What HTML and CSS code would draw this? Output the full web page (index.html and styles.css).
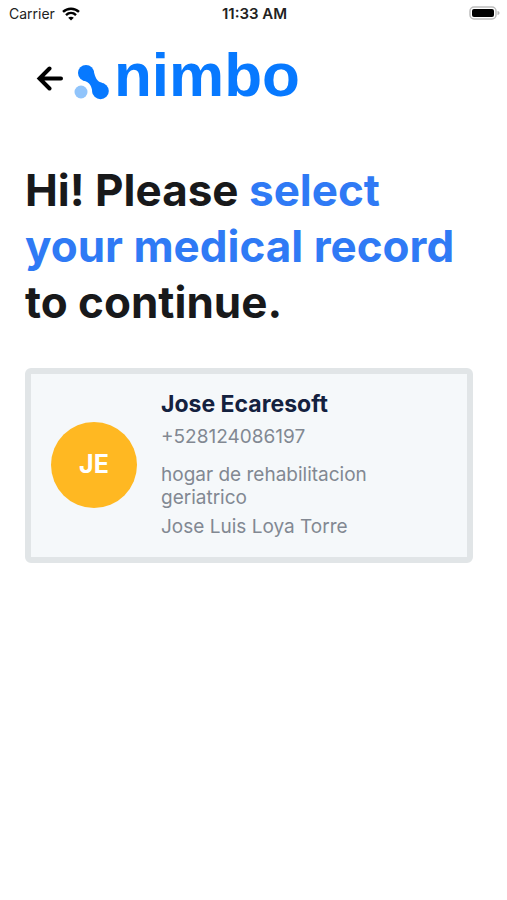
FILE: index.html
```html
<!DOCTYPE html>
<html lang="en">
<head>
<meta charset="utf-8">
<meta name="viewport" content="width=device-width, initial-scale=1">
<title>nimbo</title>
<link rel="stylesheet" href="styles.css">
</head>
<body>
<div class="status">
  <div class="carrier">
    <span>Carrier</span>
    <svg width="18" height="14" viewBox="0 0 18 14" fill="none" stroke="#000" stroke-width="2.4" aria-hidden="true">
      <path d="M1 4.9C5.4.6 12.6.6 17 4.9"/>
      <path d="M4 8.1C6.9 5.3 11.1 5.3 14 8.1"/>
      <path d="M9 13.6 6.2 10.8C7.8 9.3 10.2 9.3 11.8 10.8Z" fill="#000" stroke="none"/>
    </svg>
  </div>
  <time class="clock">11:33 AM</time>
  <div class="battery">
    <svg width="31" height="15" viewBox="0 0 31 15" aria-hidden="true">
      <rect x="1" y="1" width="26" height="12" rx="4" fill="#fff" stroke="#bdbdbd" stroke-width="1.5"/>
      <rect x="3" y="3" width="22" height="8" rx="2" fill="#000"/>
      <path d="M28.5 5C31.2 5.5 31.2 8.5 28.5 9Z" fill="#b5b5b5"/>
    </svg>
  </div>
</div>
<header class="topbar">
  <button class="back" type="button" aria-label="Back">
    <svg width="28" height="28" viewBox="0 0 28 28" fill="none" stroke="#000" stroke-width="4" stroke-linecap="round" stroke-linejoin="miter" aria-hidden="true">
      <path d="M13.5 5.5 3.5 15.5 13.5 25.500M4 15.500H25"/>
    </svg>
  </button>
  <div class="logo">
    <svg width="36" height="36" viewBox="0 0 36 36" aria-hidden="true">
      <circle cx="7" cy="28" r="6.5" fill="#90c4fb"/>
      <g fill="#0779ff">
        <circle cx="12" cy="9" r="8"/>
        <circle cx="26.5" cy="27" r="8.3"/>
        <path d="M19.6 6.5C21.5 14 22.5 17.5 28.5 19L19 30.5C17.5 22 16.5 18.5 9 16.5Z"/>
      </g>
    </svg>
    <span class="wordmark">nimbo</span>
  </div>
</header>
<main>
  <h1>Hi! Please <em>select your medical record</em> to continue.</h1>
  <button class="record" type="button">
    <span class="avatar">JE</span>
    <span class="details">
      <span class="name">Jose Ecaresoft</span>
      <span class="phone">+528124086197</span>
      <span class="clinic">hogar de rehabilitacion geriatrico</span>
      <span class="doctor">Jose Luis Loya Torre</span>
    </span>
  </button>
</main>
</body>
</html>
```
FILE: styles.css
```css
* {
  box-sizing: border-box;
}

body {
  margin: 0;
  background: #fff;
  color: #18191b;
  font-family: Inter, "Liberation Sans", sans-serif;
}

.status {
  display: grid;
  grid-template-columns: 1fr auto 1fr;
  align-items: center;
  height: 27px;
  padding: 0 7px 0 9px;
  color: #222;
  font-size: 14px;
  line-height: 20px;
}

.carrier {
  display: flex;
  align-items: center;
  gap: 7px;
}

.clock {
  font-size: 15px;
  font-weight: 600;
}

.battery {
  display: flex;
  justify-content: flex-end;
}

.topbar {
  display: flex;
  align-items: center;
  gap: 10px;
  height: 100px;
  padding: 0 36px;
}

.back {
  display: flex;
  padding: 0;
  border: 0;
  background: none;
}

.logo {
  display: flex;
  align-items: center;
  gap: 4px;
}

.logo svg {
  margin-top: 10px;
}

.wordmark {
  padding-bottom: 4px;
  color: #0779ff;
  font: bold 62px/72px "Liberation Sans", Arial, sans-serif;
}

main {
  padding: 35px 34px 0 25px;
}

h1 {
  margin: 0 0 38px;
  font-size: 44px;
  font-weight: 700;
  line-height: 56px;
}

h1 em {
  color: #2f7af5;
  font-style: normal;
}

.record {
  display: flex;
  align-items: center;
  gap: 24px;
  width: 100%;
  padding: 17px 50px 19px 20px;
  border: 6px solid #e1e5e7;
  border-radius: 6px;
  background: #f5f8fa;
  color: #828892;
  font: 19px/23px Inter, "Liberation Sans", sans-serif;
  text-align: left;
}

.avatar {
  display: flex;
  flex: none;
  align-items: center;
  justify-content: center;
  width: 86px;
  height: 86px;
  border-radius: 50%;
  background: #ffb822;
  color: #fff;
  font-size: 25px;
  font-weight: 700;
}

.details {
  display: flex;
  flex: 1;
  flex-direction: column;
}

.name {
  margin-bottom: 8px;
  color: #14213f;
  font-size: 23px;
  font-weight: 700;
  line-height: 26px;
}

.phone {
  margin-bottom: 15px;
}

.clinic {
  margin-bottom: 6px;
}
```
